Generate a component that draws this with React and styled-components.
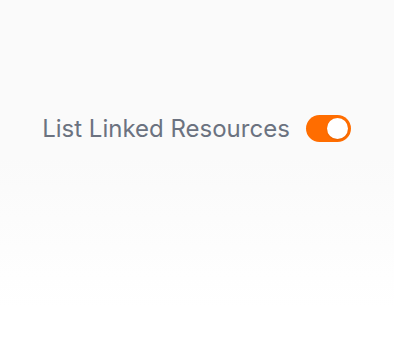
import styled, { createGlobalStyle } from "styled-components";
import { useState } from "react";

const GlobalStyle = createGlobalStyle`
	html, body {
		margin: 0;
		padding: 0;
	}

	body {
		font-family: Inter, "Noto Sans", sans-serif;
		background: #fff;
	}
`;

export default function App() {
	const [checked, setChecked] = useState(true);

	return (
		<>
			<GlobalStyle />
			<Page>
				<Row>
					<Label>List Linked Resources</Label>
					<Switch
						type="button"
						role="switch"
						aria-checked={checked}
						$checked={checked}
						onClick={() => setChecked((prev) => !prev)}
					>
						<Knob $checked={checked} />
					</Switch>
				</Row>
			</Page>
		</>
	);
}

const Page = styled.div`
	width: 100%;
	height: 350px;
	box-sizing: border-box;
	padding-top: 114px;
	padding-right: 1px;
	display: flex;
	justify-content: center;
	align-items: flex-start;
	background: linear-gradient(
		to bottom,
		#fafafa 0%,
		#fafafa 45%,
		#ffffff 88%
	);
`;

const Row = styled.div`
	display: flex;
	align-items: center;
	gap: 16px;
`;

const Label = styled.span`
	font-size: 24px;
	font-weight: 400;
	color: #6b7280;
	line-height: 29px;
`;

const Switch = styled.button`
	width: 45px;
	height: 27px;
	padding: 3px;
	border: none;
	border-radius: 999px;
	background-color: ${({ $checked }) => ($checked ? "#ff6d00" : "#d1d5db")};
	display: flex;
	align-items: center;
	justify-content: ${({ $checked }) => ($checked ? "flex-end" : "flex-start")};
	cursor: pointer;
	box-sizing: border-box;
`;

const Knob = styled.span`
	width: 21px;
	height: 21px;
	border-radius: 50%;
	background-color: #fff;
	box-shadow: 0 1px 2px rgba(0, 0, 0, 0.1);
`;
